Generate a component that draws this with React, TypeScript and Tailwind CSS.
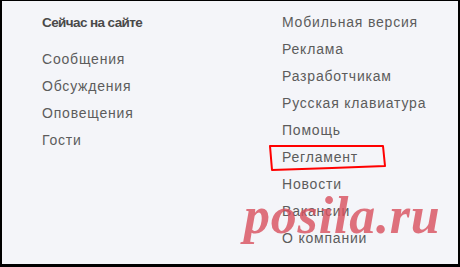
import React from "react";

const left = ["Сообщения", "Обсуждения", "Оповещения", "Гости"];
const right = [
  "Мобильная версия",
  "Реклама",
  "Разработчикам",
  "Русская клавиатура",
  "Помощь",
  "Регламент",
  "Новости",
  "Вакансии",
  "О компании",
];

export default function App() {
  return (
    <div className="relative w-[460px] h-[267px] overflow-hidden border-l-2 border-r-2 border-t border-b-[3px] border-black bg-[#f4f5f9] font-['Liberation_Sans',Arial,sans-serif] text-[14px] tracking-[0.8px] leading-[27px] text-[#5c5c5c]">
      <div className="flex pt-2 pl-10">
        <div className="w-[240px] flex flex-col">
          <div className="font-bold text-[13.5px] text-[#4a4a4a] tracking-[-0.6px] mb-[10px]">Сейчас на сайте</div>
          {left.map((t) => (
            <div key={t}>{t}</div>
          ))}
        </div>
        <div className="flex flex-col">
          {right.map((t) => (
            <div key={t}>{t}</div>
          ))}
        </div>
      </div>
      <svg className="absolute left-0 top-0" width="460" height="267" viewBox="0 0 460 267">
        <path
          d="M268 145 L381 145 L383 165 L330 167 L270 169 Z"
          fill="none"
          stroke="#ff0000"
          strokeWidth="2"
          strokeLinejoin="round"
        />
      </svg>
      <div className="absolute left-[242px] top-[185px] font-['Liberation_Serif',serif] italic font-bold text-[52px] leading-[60px] text-[#d9505e] opacity-80">
        posila.ru
      </div>
    </div>
  );
}
